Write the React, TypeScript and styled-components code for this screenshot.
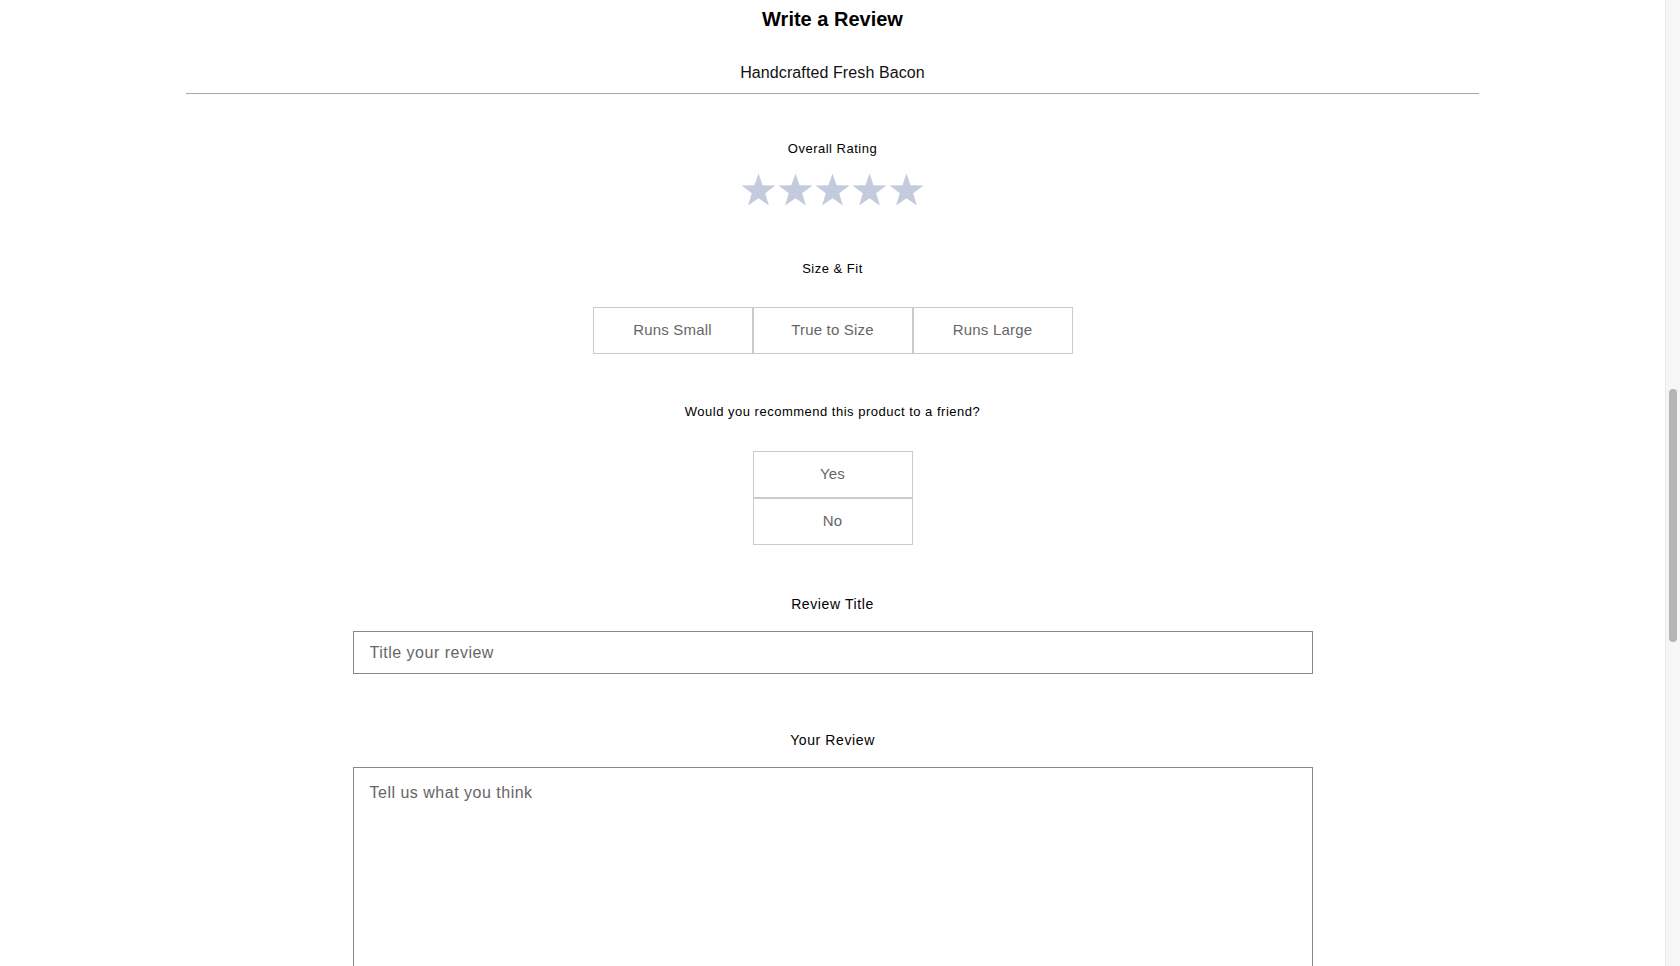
import styled, { createGlobalStyle } from 'styled-components';

const GlobalStyle = createGlobalStyle`
  html, body {
    margin: 0;
    padding: 0;
    height: 100%;
    overflow: hidden;
    background: #fff;
  }
  body {
    font-family: "Liberation Sans", Helvetica, Arial, sans-serif;
    color: #000;
  }
`;

const Page = styled.div`
  display: flex;
  height: 100vh;
  overflow: hidden;
`;

const Main = styled.main`
  flex: 1;
  display: flex;
  flex-direction: column;
  align-items: center;

  & > * {
    flex-shrink: 0;
  }
`;

const ScrollTrack = styled.div`
  width: 15px;
  flex-shrink: 0;
  background: #f6f6f6;
  border-left: 1px solid #ebebeb;
  box-sizing: border-box;
  display: flex;
  justify-content: center;
`;

const ScrollThumb = styled.div`
  width: 8px;
  height: 253px;
  margin-top: 389px;
  border-radius: 4px;
  background: #b5b5b5;
`;

const Title = styled.h1`
  margin: 0;
  padding-top: 7px;
  font-size: 20px;
  line-height: 24px;
  font-weight: 700;
`;

const ProductHeader = styled.div`
  width: 1293px;
  margin-top: 32px;
  padding-bottom: 10px;
  border-bottom: 1px solid #a8a8a8;
  text-align: center;
  font-size: 16px;
  line-height: 20px;
  color: #111;
  letter-spacing: 0.1px;
`;

const Label = styled.div<{ $gap: number; $size?: number }>`
  margin-top: ${(p) => p.$gap}px;
  font-size: ${(p) => p.$size ?? 13}px;
  line-height: ${(p) => (p.$size ?? 13) + 3}px;
  letter-spacing: ${(p) => (p.$size === 14 ? 0.6 : 0.5)}px;
  color: #000;
  text-align: center;
`;

const Stars = styled.div`
  display: flex;
  gap: 2px;
  margin-top: 16px;
`;

const StarIcon = styled.svg`
  width: 35px;
  height: 33px;
  display: block;
`;

const OptionRow = styled.div<{ $column?: boolean; $gap: number }>`
  display: flex;
  flex-direction: ${(p) => (p.$column ? 'column' : 'row')};
  margin-top: ${(p) => p.$gap}px;
`;

const Option = styled.button`
  width: 160px;
  height: 47px;
  box-sizing: border-box;
  border: 1px solid #cbcbcb;
  background: #fff;
  font-family: inherit;
  font-size: 15px;
  line-height: 15px;
  padding: 0 0 2px;
  letter-spacing: 0.2px;
  color: #666;
  cursor: pointer;
`;

const TitleInput = styled.input`
  width: 960px;
  height: 43px;
  box-sizing: border-box;
  margin-top: 18px;
  border: 1px solid #888;
  padding: 0 16px;
  font-family: inherit;
  font-size: 16px;
  letter-spacing: 0.5px;
  color: #333;
  outline: none;

  &::placeholder {
    color: #666;
  }
`;

const ReviewArea = styled.textarea`
  width: 960px;
  height: 230px;
  box-sizing: border-box;
  margin-top: 18px;
  border: 1px solid #888;
  padding: 15px 16px;
  font-family: inherit;
  font-size: 16px;
  line-height: 20px;
  letter-spacing: 0.5px;
  color: #333;
  resize: none;
  outline: none;

  &::placeholder {
    color: #666;
  }
`;

const Star = () => (
  <StarIcon viewBox="0 0 35 33">
    <polygon
      fill="#c4cbdf"
      points="17.5,0.5 21.6,12.3 34.5,12.6 24.2,20.3 27.9,32.5 17.5,25.3 7.1,32.5 10.8,20.3 0.5,12.6 13.4,12.3"
    />
  </StarIcon>
);

export default function App() {
  const sizes = ['Runs Small', 'True to Size', 'Runs Large'];

  return (
    <Page>
      <GlobalStyle />
      <Main>
        <Title>Write a Review</Title>
        <ProductHeader>Handcrafted Fresh Bacon</ProductHeader>

        <Label $gap={47}>Overall Rating</Label>
        <Stars>
          {[1, 2, 3, 4, 5].map((n) => (
            <Star key={n} />
          ))}
        </Stars>

        <Label $gap={55}>Size &amp; Fit</Label>
        <OptionRow $gap={30}>
          {sizes.map((s) => (
            <Option key={s}>{s}</Option>
          ))}
        </OptionRow>

        <Label $gap={50}>Would you recommend this product to a friend?</Label>
        <OptionRow $column $gap={31}>
          <Option>Yes</Option>
          <Option>No</Option>
        </OptionRow>

        <Label $gap={51} $size={14}>Review Title</Label>
        <TitleInput placeholder="Title your review" />

        <Label $gap={58} $size={14}>Your Review</Label>
        <ReviewArea placeholder="Tell us what you think" />
      </Main>
      <ScrollTrack>
        <ScrollThumb />
      </ScrollTrack>
    </Page>
  );
}
